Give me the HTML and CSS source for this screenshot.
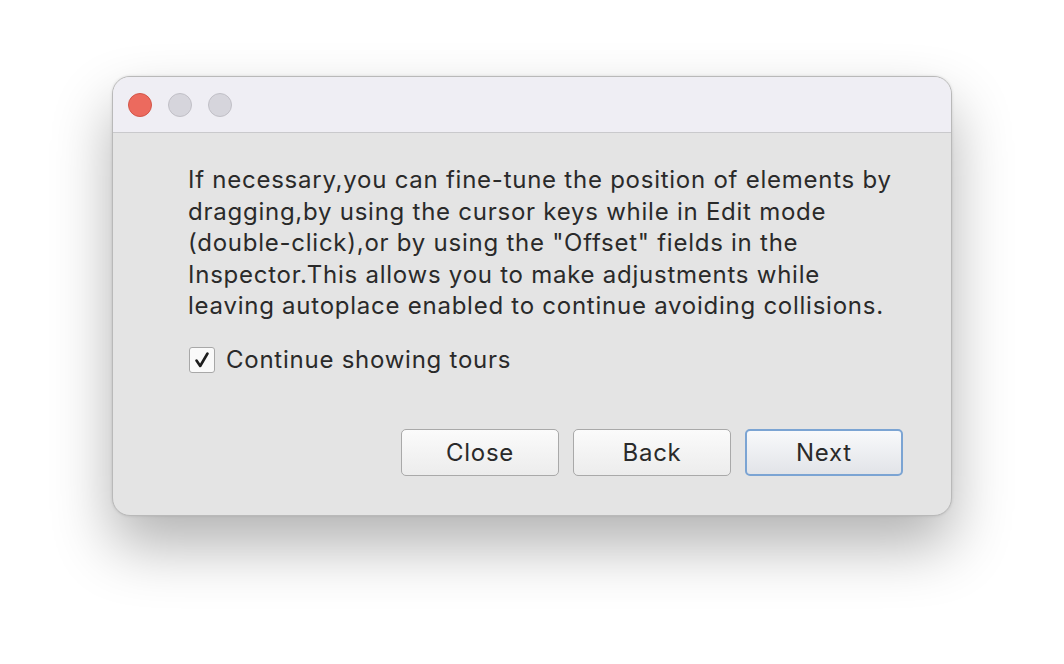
FILE: index.html
```html
<!DOCTYPE html>
<html>
<head>
<meta charset="utf-8">
<link rel="stylesheet" href="styles.css">
</head>
<body>
<div class="stage">
  <div class="window">
    <div class="titlebar">
      <span class="light red"></span>
      <span class="light gray"></span>
      <span class="light gray"></span>
    </div>
    <div class="content">
      <p class="message">If necessary,you can fine-tune the position of elements by<br>dragging,by using the cursor keys while in Edit mode<br>(double-click),or by using the "Offset" fields in the<br>Inspector.This allows you to make adjustments while<br>leaving autoplace enabled to continue avoiding collisions.</p>
      <label class="check-row">
        <span class="checkbox">
          <svg width="18" height="18" viewBox="0 0 18 18"><path d="M3.5 9.5 L7.2 15 L14.5 2.5" fill="none" stroke="#1e1e1e" stroke-width="2.6" stroke-linecap="round" stroke-linejoin="round"/></svg>
        </span>
        <span class="check-label">Continue showing tours</span>
      </label>
      <div class="buttons">
        <button class="btn">Close</button>
        <button class="btn">Back</button>
        <button class="btn primary">Next</button>
      </div>
    </div>
  </div>
</div>
</body>
</html>
```
FILE: styles.css
```css
html, body {
  margin: 0;
  padding: 0;
  background: #ffffff;
}
body {
  height: 664px;
  font-family: "Inter", "Liberation Sans", Arial, sans-serif;
  color: #2a2a2a;
  letter-spacing: 0.75px;
}
.stage {
  padding: 76px 0 0 112px;
}
.window {
  width: 840px;
  height: 440px;
  box-sizing: border-box;
  border-radius: 18px;
  background: #e4e4e4;
  border: 1px solid #b9b9b9;
  overflow: hidden;
  box-shadow: 0 30px 60px rgba(0,0,0,0.3), 0 0 3px rgba(0,0,0,0.12);
  display: flex;
  flex-direction: column;
}
.titlebar {
  height: 56px;
  background: #efeef4;
  border-bottom: 1px solid #c9c9cc;
  display: flex;
  align-items: center;
  gap: 16px;
  padding-left: 15px;
  box-sizing: border-box;
}
.light {
  width: 24px;
  height: 24px;
  border-radius: 50%;
  box-sizing: border-box;
}
.light.red {
  background: #ec6a5e;
  border: 1px solid #d25548;
}
.light.gray {
  background: #d6d5dc;
  border: 1px solid #c0bfc6;
}
.content {
  flex: 1;
  padding: 31px 48px 0 75px;
  display: flex;
  flex-direction: column;
}
.message {
  margin: 0;
  font-size: 24px;
  line-height: 31.5px;
  white-space: nowrap;
}
.check-row {
  margin-top: 22px;
  display: flex;
  align-items: center;
  gap: 11px;
  height: 32px;
}
.checkbox {
  width: 26px;
  height: 26px;
  box-sizing: border-box;
  border: 1px solid #a8a8a8;
  border-radius: 3px;
  background: #fafafa;
  display: flex;
  align-items: center;
  justify-content: center;
  margin-left: 1px;
}
.check-label {
  font-size: 24px;
}
.buttons {
  margin-top: 53px;
  display: flex;
  justify-content: flex-end;
  gap: 14px;
}
.btn {
  width: 158px;
  height: 47px;
  border: 1px solid #a9a9a9;
  border-radius: 5px;
  background: linear-gradient(#fbfbfb, #ececec);
  font-family: "Inter", "Liberation Sans", Arial, sans-serif;
  font-size: 24px;
  letter-spacing: 0.75px;
  color: #2a2a2a;
  padding: 0;
}
.btn.primary {
  border: 2px solid #7ba4d3;
  background: linear-gradient(#f8f9fb, #e2e4e8);
}
```
